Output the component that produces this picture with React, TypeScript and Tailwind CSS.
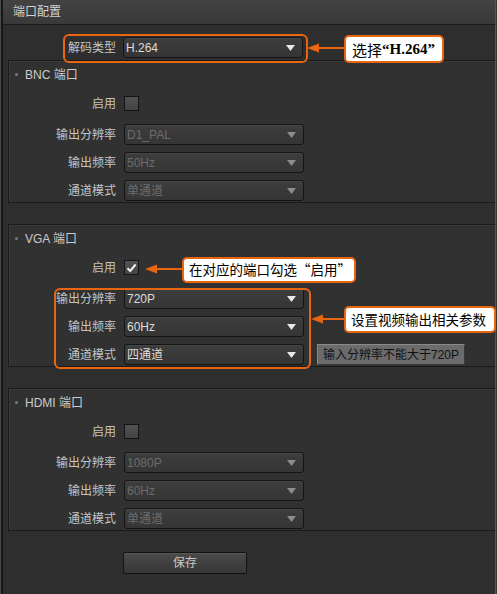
import React from "react";

const FONT = "font-['Liberation_Sans','Noto_Sans_CJK_SC',sans-serif]";

function Tri({ disabled }: { disabled?: boolean }) {
  return (
    <svg width="9" height="6" viewBox="0 0 9 6">
      <path d="M0 0H9L4.5 6Z" fill={disabled ? "#8c8c8c" : "#e8e8e8"} />
    </svg>
  );
}

function Select({ value, disabled }: { value: string; disabled?: boolean }) {
  return (
    <div className="ml-[8px] flex items-center justify-between w-[180px] h-[21px] rounded-[3px] border border-[#141414] bg-linear-to-b from-[#3d3d3d] to-[#353535] shadow-[inset_0_1px_0_#474747] pl-[2px] pr-[7px]">
      <span className={`text-[12px] leading-none ${disabled ? "text-[#6c6c6c]" : "text-[#dcdcdc]"}`}>{value}</span>
      <Tri disabled={disabled} />
    </div>
  );
}

function Row({ label, value, disabled, extra }: { label: string; value: string; disabled?: boolean; extra?: React.ReactNode }) {
  return (
    <div className="flex items-center h-[21px]">
      <div className="w-[107px] text-right text-[12px] leading-none text-[#c4c4c4]">{label}</div>
      <Select value={value} disabled={disabled} />
      {extra}
    </div>
  );
}

function Checkbox({ checked }: { checked?: boolean }) {
  return (
    <div className="ml-[8px] w-[15px] h-[15px] border border-[#141414] bg-linear-to-b from-[#525252] to-[#444444] flex items-center justify-center">
      {checked && (
        <svg width="11" height="10" viewBox="0 0 11 10">
          <path d="M1.5 5.2L4.2 8L9.6 1.5" fill="none" stroke="#f2f2f2" strokeWidth="2" />
        </svg>
      )}
    </div>
  );
}

function Section({ title, checked, rows, extraLast }: { title: string; checked?: boolean; rows: [string, string][]; extraLast?: React.ReactNode }) {
  const disabled = !checked;
  return (
    <div className="ml-[5px] border border-r-0 border-[#1a1a1a] bg-[#313131] shadow-[inset_1px_1px_0_#3a3a3a] pb-[1px]">
      <div className="h-[27px] flex items-center pl-[6px]">
        <div className="w-[3px] h-[3px] rounded-full bg-[#7a7a7a]" />
        <span className="ml-[7px] text-[12px] leading-none text-[#cbcbcb]">{title}</span>
      </div>
      <div className="mt-[8px] flex items-center h-[15px]">
        <div className="w-[107px] text-right text-[12px] leading-none text-[#c4c4c4]">启用</div>
        <Checkbox checked={checked} />
      </div>
      <div className="mt-[13px] flex flex-col gap-[7px]">
        {rows.map(([l, v], i) => (
          <Row key={l} label={l} value={v} disabled={disabled} extra={i === rows.length - 1 ? extraLast : undefined} />
        ))}
      </div>
    </div>
  );
}

function Arrow({ left, top, width }: { left: number; top: number; width: number }) {
  return (
    <svg className="absolute" style={{ left, top }} width={width} height="10" viewBox={`0 0 ${width} 10`}>
      <line x1="8" y1="5" x2={width} y2="5" stroke="#e8660f" strokeWidth="2" />
      <path d="M0 5L12 0.5V9.5Z" fill="#e8660f" />
    </svg>
  );
}

export default function App() {
  return (
    <div className={`relative w-[497px] h-[594px] overflow-hidden bg-[#2e2e2e] ${FONT}`}>
      <div className="h-full border-l border-[#4a4a4a] border-r border-r-[#3a3a3a]">
        <div className="h-full border-l-2 border-[#171717] border-r border-r-[#555555] flex flex-col">
          {/* title bar */}
          <div className="h-[25px] shrink-0 bg-linear-to-b from-[#434343] to-[#393939] border-b border-[#1c1c1c] flex items-center pl-[10px]">
            <span className="text-[12px] leading-none text-[#d2d2d2]">端口配置</span>
          </div>
          {/* decoder type */}
          <div className="h-[35px] shrink-0 flex items-start pt-[12px]">
            <div className="flex items-center h-[21px]">
              <div className="w-[113px] text-right text-[12px] leading-none text-[#c4c4c4]">解码类型</div>
              <div className="-ml-[1px]">
                <Select value="H.264" />
              </div>
            </div>
          </div>

          <Section title="BNC 端口" rows={[["输出分辨率", "D1_PAL"], ["输出频率", "50Hz"], ["通道模式", "单通道"]]} />
          <div className="mt-[21px]">
            <Section
              title="VGA 端口"
              checked
              rows={[["输出分辨率", "720P"], ["输出频率", "60Hz"], ["通道模式", "四通道"]]}
              extraLast={
                <div className="ml-[13px] h-[21px] px-[5px] flex items-center bg-[#6b6b6b] border border-[#8a8a8a] border-r-[#3a3a3a] border-b-[#3a3a3a] text-[12px] leading-none text-[#111111]">
                  输入分辨率不能大于720P
                </div>
              }
            />
          </div>
          <div className="mt-[21px]">
            <Section title="HDMI 端口" rows={[["输出分辨率", "1080P"], ["输出频率", "60Hz"], ["通道模式", "单通道"]]} />
          </div>

          <div className="mt-[21px] ml-[120px] w-[124px] h-[22px] rounded-[2px] border border-[#121212] bg-linear-to-b from-[#4a4a4a] to-[#373737] shadow-[inset_0_1px_0_#575757] flex items-center justify-center text-[12px] leading-none text-[#c8c8c8]">
            保存
          </div>
        </div>
      </div>

      {/* annotations */}
      <div className="absolute left-[63px] top-[34px] w-[245px] h-[29px] rounded-[6px] border-2 border-[#e8660f]" />
      <div className="absolute left-[54px] top-[288px] w-[257px] h-[81px] rounded-[6px] border-2 border-[#e8660f]" />

      <Arrow left={307} top={43} width={38} />
      <Arrow left={145} top={264} width={38} />
      <Arrow left={311} top={314} width={34} />

      <div className="absolute left-[344px] top-[35px] w-[100px] h-[28px] rounded-[5px] border-2 border-[#e8660f] bg-white flex items-center pl-[6px] text-[15px] leading-none text-black">
        <span className="font-['Noto_Sans_CJK_SC',sans-serif]">选择</span>
        <span className="font-['Liberation_Serif',serif] font-bold">“H.264”</span>
      </div>
      <div className="absolute left-[182px] top-[257px] w-[174px] h-[26px] rounded-[5px] border-2 border-[#e8660f] bg-white flex items-center pl-[5px] text-[13.5px] leading-none text-black font-['Noto_Sans_CJK_SC',sans-serif]">
        在对应的端口勾选“启用”
      </div>
      <div className="absolute left-[344px] top-[306px] w-[152px] h-[27px] rounded-[5px] border-2 border-[#e8660f] bg-white flex items-center pl-[5px] text-[13.5px] leading-none text-black font-['Noto_Sans_CJK_SC',sans-serif]">
        设置视频输出相关参数
      </div>
    </div>
  );
}
